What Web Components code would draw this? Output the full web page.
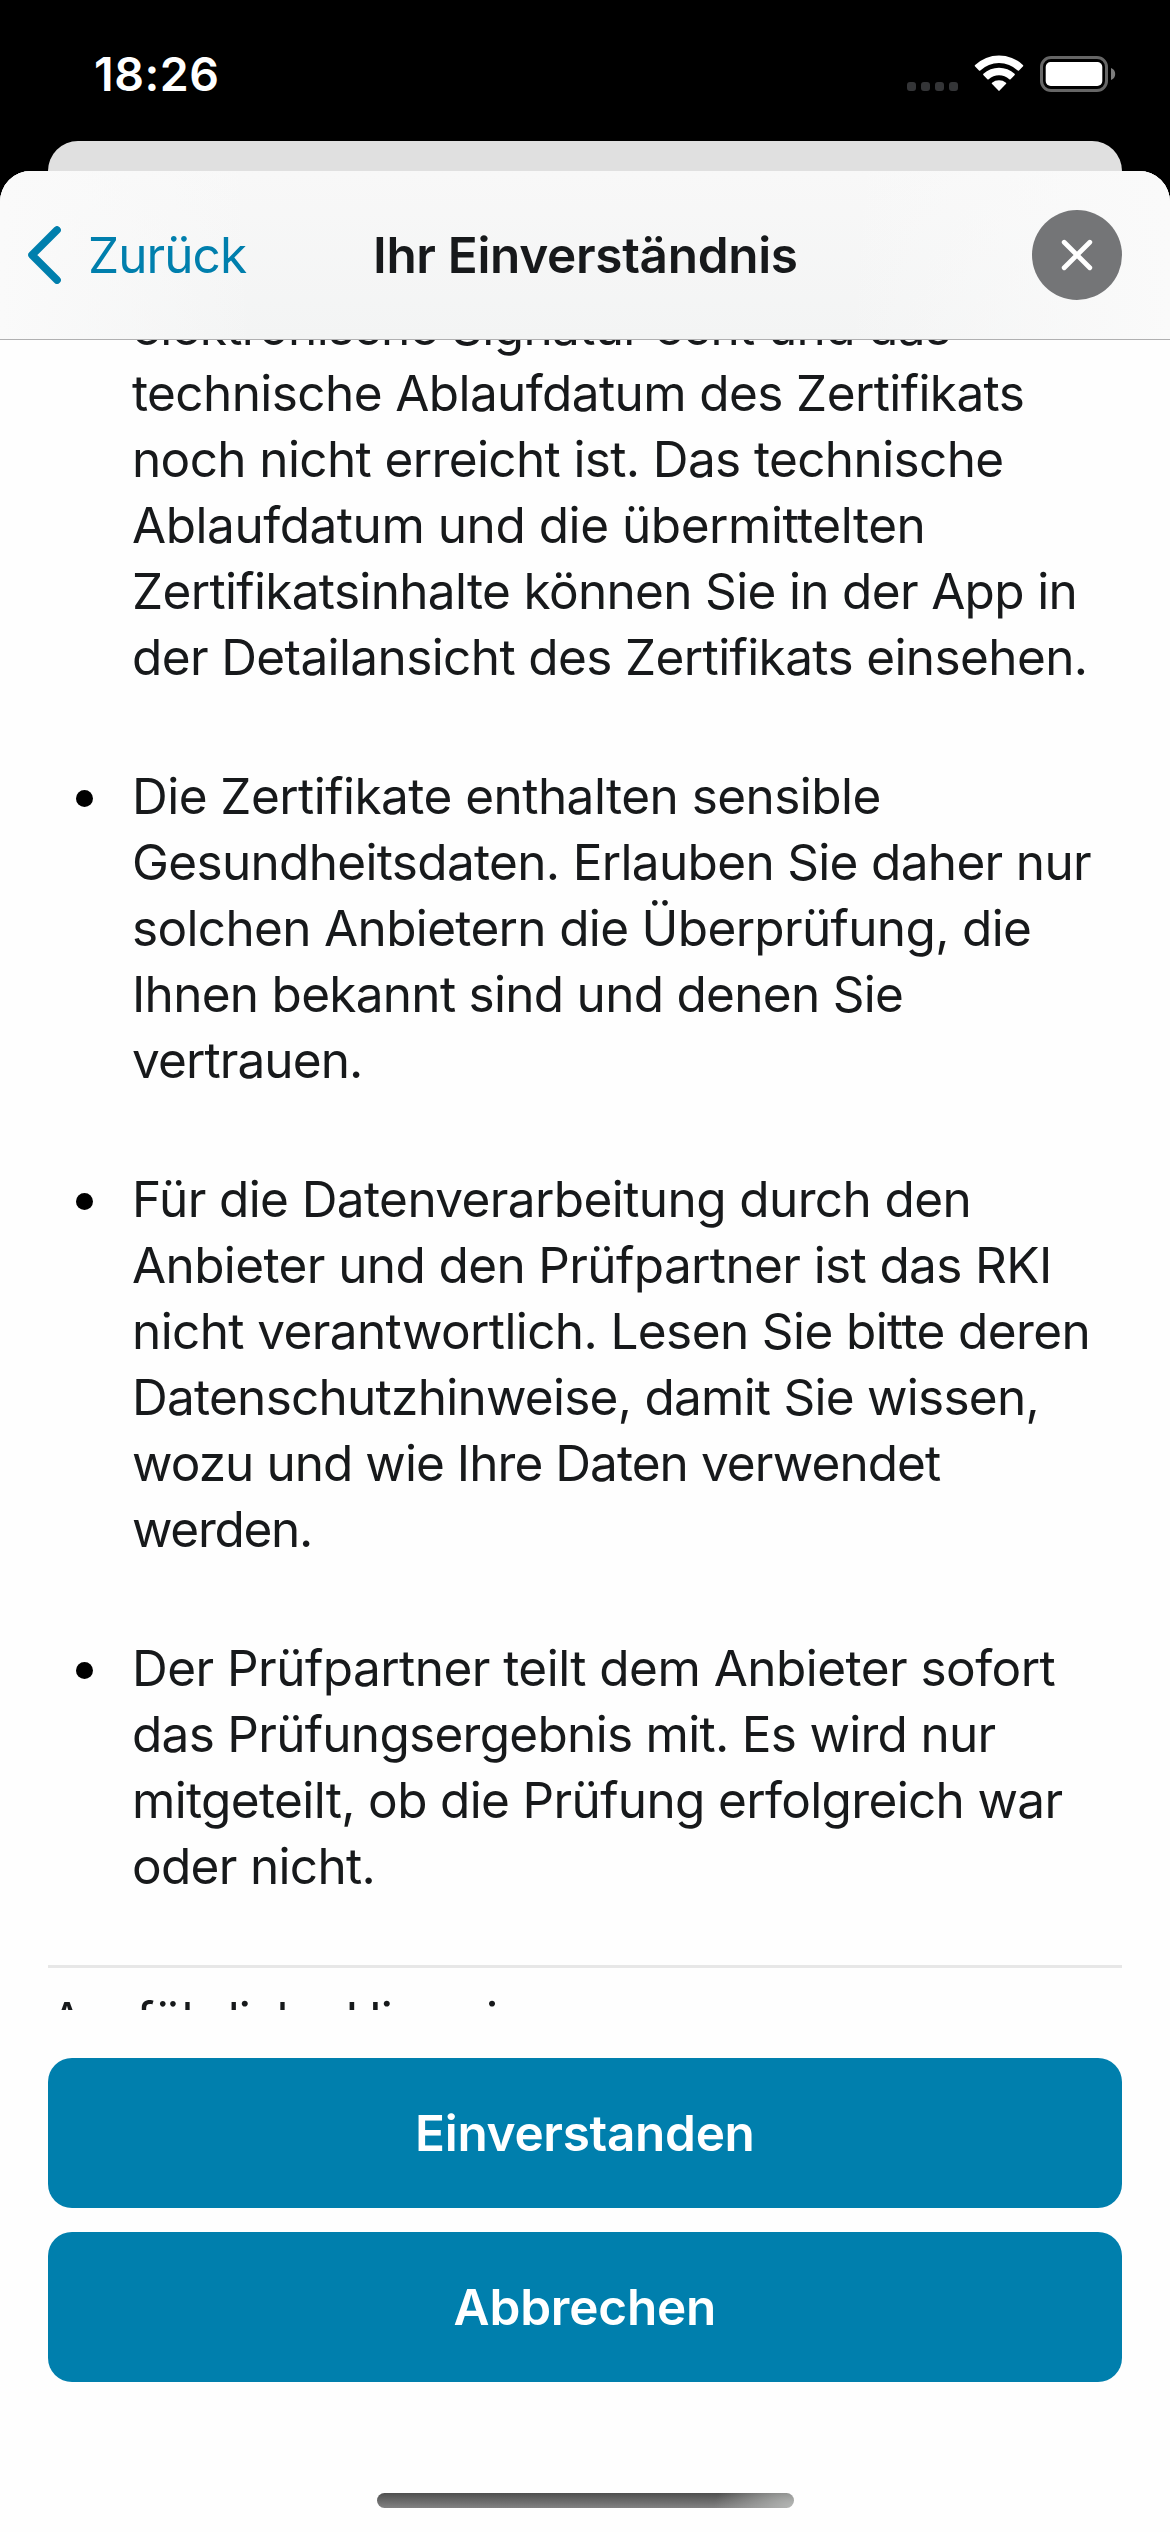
<!DOCTYPE html>
<html lang="de">
<head>
<meta charset="utf-8">
<title>Ihr Einverständnis</title>
<style>
html,body{margin:0;padding:0;background:#000}
body{width:1170px;height:2532px;overflow:hidden;font-family:Inter,"Liberation Sans",sans-serif;color:#17191b}
</style>
</head>
<body>
<consent-screen></consent-screen>
<script>
const define = (name, html, ready) => {
  const t = document.createElement('template');
  t.innerHTML = html;
  customElements.define(name, class extends HTMLElement {
    constructor() {
      super();
      this.attachShadow({mode: 'open'}).append(t.content.cloneNode(true));
    }
    connectedCallback() { if (ready) ready(this); }
  });
};

// One line of text, tracked so that its glyphs span `w` pixels.
const ctx = document.createElement('canvas').getContext('2d');
const fit = el => {
  const w = parseFloat(el.getAttribute('w'));
  const s = el.getAttribute('until') || el.textContent;
  const cs = getComputedStyle(el);
  ctx.font = `${cs.fontWeight} ${cs.fontSize} ${cs.fontFamily}`;
  const m = ctx.measureText(s);
  const bearings = m.width - m.actualBoundingBoxRight - m.actualBoundingBoxLeft;
  const range = document.createRange();
  range.setStart(el.firstChild, 0);
  range.setEnd(el.firstChild, s.length);
  const ink = range.getBoundingClientRect().width - bearings;
  const sp = (w - ink) / (s.length - 1);
  el.style.letterSpacing = sp.toFixed(3) + 'px';
  el.style.marginRight = (-sp).toFixed(3) + 'px';
};
define('text-line', `<style>:host{display:block;white-space:pre;font-kerning:normal;font-variant-ligatures:none;font-feature-settings:"calt" 0,"liga" 0}</style><slot></slot>`, fit);

define('status-bar', `<style>
:host{display:flex;box-sizing:border-box;height:141px;padding:46px 54px 0 94px;justify-content:space-between;align-items:flex-start;color:#fff}
text-line{font-size:46.5px;font-weight:600;line-height:56px}
svg{display:block}
</style>
<text-line w="121.3">18:26</text-line>
<svg width="210" height="50" viewBox="906 46 210 50">
<g fill="#343537"><rect x="907" y="82" width="9" height="9" rx="3"/><rect x="921" y="82" width="9" height="9" rx="3"/><rect x="935" y="82" width="9" height="9" rx="3"/><rect x="949" y="82" width="9" height="9" rx="3"/></g>
<g fill="#fff">
<path d="M974.9 66.2Q974.5 65.6 975.1 65A34.5 34.5 0 0 1 1022.9 65Q1023.5 65.6 1023.1 66.2L1019 70.5Q1018.4 71.1 1017.7 70.5A27.3 27.3 0 0 0 980.3 70.5Q979.6 71.1 979 70.5Z"/>
<path d="M983.3 75Q982.8 74.4 983.4 73.8A22.8 22.8 0 0 1 1014.6 73.8Q1015.2 74.4 1014.7 75L1010.6 79.2Q1010 79.8 1009.3 79.2A15.6 15.6 0 0 0 988.7 79.2Q988 79.8 987.4 79.2Z"/>
<path d="M991.9 83.8Q991.4 83.2 992 82.7A11.2 11.2 0 0 1 1006 82.7Q1006.6 83.2 1006.1 83.8L999.6 90.6Q999 91.2 998.4 90.6Z"/>
<rect x="1045.7" y="62" width="56.6" height="24" rx="5"/></g>
<rect x="1041.5" y="57.5" width="65" height="33" rx="9.5" fill="none" stroke="#666" stroke-width="3"/>
<path d="M1111 68A6.4 6.4 0 0 1 1111 80Z" fill="#7c7c7c"/>
</svg>`);

define('nav-bar', `<style>
:host{display:grid;grid-template-columns:1fr auto 1fr;align-items:center;box-sizing:border-box;height:169px;padding:0 27px;border-bottom:1px solid #b0b0b1;
background:linear-gradient(90deg,#fafafa,rgba(250,250,250,0) 22%,rgba(250,250,250,0) 72%,#fafafa),linear-gradient(#f8f8f8,#f3f4f4)}
.back{display:flex;align-items:center;gap:27px;color:#007fad;font-size:49.5px;line-height:66px}
text-line{font-size:49.5px;line-height:66px}
.t{font-weight:600;padding-left:1px}
.x{justify-self:end;margin-right:21px}
svg{display:block}
</style>
<div class="back"><svg width="34" height="58" viewBox="27 226 34 58"><path d="M57 230L32 255L57 280" fill="none" stroke="#007fad" stroke-width="7.6" stroke-linecap="round" stroke-linejoin="round"/></svg><text-line w="156.9">Zurück</text-line></div>
<text-line class="t" w="420.8">Ihr Einverständnis</text-line>
<svg class="x" width="90" height="90" viewBox="0 0 90 90"><circle cx="45" cy="45" r="45" fill="#747577"/><path d="M32.2 32.2L57.8 57.8M57.8 32.2L32.2 57.8" stroke="#fff" stroke-width="4.8" stroke-linecap="round"/></svg>`);

define('bullet-item', `<style>
:host{display:grid;grid-template-columns:56px 1fr;font-size:49.5px;line-height:66px}
.m{display:flex;height:66px;align-items:center;padding:5px 0 0 0;box-sizing:border-box}
i{width:17px;height:17px;border-radius:50%;background:#000}
:host([plain]) i{visibility:hidden}
</style><div class="m"><i></i></div><div><slot></slot></div>`);

define('action-button', `<style>
:host{display:flex;align-items:center;justify-content:center;height:150px;border-radius:24px;background:#007fad;color:#fff;font-size:49.5px;font-weight:600;line-height:66px}
</style><slot></slot>`);

define('home-indicator', `<style>
:host{display:block;width:417px;height:15px;border-radius:7.5px;background:radial-gradient(ellipse 80px 40px at 100% 90%,#b4b6b4,rgba(180,182,180,0)),linear-gradient(#4f4f4f,#828282)}
</style>`);

define('consent-screen', `<style>
:host{display:flex;flex-direction:column;width:1170px;height:2532px;background:#000}
.back{height:60px;margin:0 48px -30px;border-radius:30px 30px 0 0;background:#e0e0e0;flex:none}
.sheet{position:relative;flex:1;display:flex;flex-direction:column;border-radius:31px 31px 0 0;overflow:hidden;background:#fefefe}
.scroll{height:1670px;overflow:hidden;flex:none}
.list{display:flex;flex-direction:column;gap:73px;margin-top:-46px;padding:0 40px 0 76px}
hr{height:3px;border:0;margin:66px 48px 19px;background:#e7e7e7}
.more{font-size:49.5px;line-height:66px;padding-left:50px}
.actions{display:flex;flex-direction:column;gap:24px;padding:48px 48px 0}
home-indicator{margin:111px auto 0}
</style>
<status-bar></status-bar>
<div class="back"></div>
<div class="sheet">
<nav-bar></nav-bar>
<div class="scroll">
<div class="list">
<bullet-item plain>
<text-line w="814.9">elektronische Signatur echt und das</text-line>
<text-line w="890.7">technische Ablaufdatum des Zertifikats</text-line>
<text-line w="867.3">noch nicht erreicht ist. Das technische</text-line>
<text-line w="789.6">Ablaufdatum und die übermittelten</text-line>
<text-line w="940.5">Zertifikatsinhalte können Sie in der App in</text-line>
<text-line w="950.8">der Detailansicht des Zertifikats einsehen.</text-line>
</bullet-item>
<bullet-item>
<text-line w="743.5">Die Zertifikate enthalten sensible</text-line>
<text-line w="957">Gesundheitsdaten. Erlauben Sie daher nur</text-line>
<text-line w="896">solchen Anbietern die Überprüfung, die</text-line>
<text-line w="766">Ihnen bekannt sind und denen Sie</text-line>
<text-line w="227">vertrauen.</text-line>
</bullet-item>
<bullet-item>
<text-line w="832.5">Für die Datenverarbeitung durch den</text-line>
<text-line w="915">Anbieter und den Prüfpartner ist das RKI</text-line>
<text-line w="952.5">nicht verantwortlich. Lesen Sie bitte deren</text-line>
<text-line w="900.5">Datenschutzhinweise, damit Sie wissen,</text-line>
<text-line w="808">wozu und wie Ihre Daten verwendet</text-line>
<text-line w="177">werden.</text-line>
</bullet-item>
<bullet-item>
<text-line w="919.5">Der Prüfpartner teilt dem Anbieter sofort</text-line>
<text-line w="861.5">das Prüfungsergebnis mit. Es wird nur</text-line>
<text-line w="927.5">mitgeteilt, ob die Prüfung erfolgreich war</text-line>
<text-line w="238.5">oder nicht.</text-line>
</bullet-item>
</div>
<hr>
<text-line class="more" w="445" until="Ausführliche Hinwei">Ausführliche Hinweise</text-line>
</div>
<div class="actions">
<action-button><text-line w="333.5">Einverstanden</text-line></action-button>
<action-button><text-line w="258.5">Abbrechen</text-line></action-button>
</div>
<home-indicator></home-indicator>
</div>`);
</script>
</body>
</html>
